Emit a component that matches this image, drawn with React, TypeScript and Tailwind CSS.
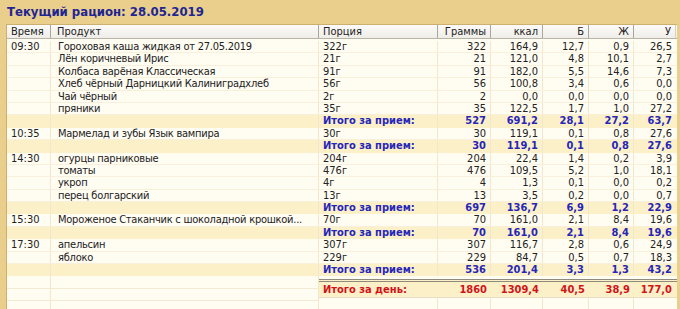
type Item = { time?: string; name: string; portion: string; g: string; kcal: string; p: string; f: string; c: string };
type Meal = { items: Item[]; total: [string, string, string, string, string] };

const meals: Meal[] = [
  {
    items: [
      { time: '09:30', name: 'Гороховая каша жидкая от 27.05.2019', portion: '322г', g: '322', kcal: '164,9', p: '12,7', f: '0,9', c: '26,5' },
      { name: 'Лён коричневый Ирис', portion: '21г', g: '21', kcal: '121,0', p: '4,8', f: '10,1', c: '2,7' },
      { name: 'Колбаса варёная Классическая', portion: '91г', g: '91', kcal: '182,0', p: '5,5', f: '14,6', c: '7,3' },
      { name: 'Хлеб чёрный Дарницкий Калиниградхлеб', portion: '56г', g: '56', kcal: '100,8', p: '3,4', f: '0,6', c: '0,0' },
      { name: 'Чай чёрный', portion: '2г', g: '2', kcal: '0,0', p: '0,0', f: '0,0', c: '0,0' },
      { name: 'пряники', portion: '35г', g: '35', kcal: '122,5', p: '1,7', f: '1,0', c: '27,2' },
    ],
    total: ['527', '691,2', '28,1', '27,2', '63,7'],
  },
  {
    items: [{ time: '10:35', name: 'Мармелад и зубы Язык вампира', portion: '30г', g: '30', kcal: '119,1', p: '0,1', f: '0,8', c: '27,6' }],
    total: ['30', '119,1', '0,1', '0,8', '27,6'],
  },
  {
    items: [
      { time: '14:30', name: 'огурцы парниковые', portion: '204г', g: '204', kcal: '22,4', p: '1,4', f: '0,2', c: '3,9' },
      { name: 'томаты', portion: '476г', g: '476', kcal: '109,5', p: '5,2', f: '1,0', c: '18,1' },
      { name: 'укроп', portion: '4г', g: '4', kcal: '1,3', p: '0,1', f: '0,0', c: '0,2' },
      { name: 'перец болгарский', portion: '13г', g: '13', kcal: '3,5', p: '0,2', f: '0,0', c: '0,7' },
    ],
    total: ['697', '136,7', '6,9', '1,2', '22,9'],
  },
  {
    items: [{ time: '15:30', name: 'Мороженое Стаканчик с шоколадной крошкой...', portion: '70г', g: '70', kcal: '161,0', p: '2,1', f: '8,4', c: '19,6' }],
    total: ['70', '161,0', '2,1', '8,4', '19,6'],
  },
  {
    items: [
      { time: '17:30', name: 'апельсин', portion: '307г', g: '307', kcal: '116,7', p: '2,8', f: '0,6', c: '24,9' },
      { name: 'яблоко', portion: '229г', g: '229', kcal: '84,7', p: '0,5', f: '0,7', c: '18,3' },
    ],
    total: ['536', '201,4', '3,3', '1,3', '43,2'],
  },
];

const cols = 'grid grid-cols-[44px_268px_119px_53px_52px_46px_45px_42px]';
const cell = 'px-[4px] truncate border-r border-[#f1e7cd]';
const num = `${cell} text-right`;

function ItemRow({ it }: { it: Item }) {
  return (
    <div className={`${cols} h-[12.4px] leading-[12.4px] bg-[#fffcf2] border-b border-[#f8f0da] text-[#222]`}>
      <div className={cell}>{it.time ?? ''}</div>
      <div className="pl-[7px] min-w-0 whitespace-nowrap overflow-hidden border-r border-[#f1e7cd] tracking-[-0.25px]">{it.name}</div>
      <div className={cell}>{it.portion}</div>
      <div className={num}>{it.g}</div>
      <div className={num}>{it.kcal}</div>
      <div className={num}>{it.p}</div>
      <div className={num}>{it.f}</div>
      <div className={`${num} border-r-0`}>{it.c}</div>
    </div>
  );
}

function TotalRow({ t }: { t: Meal['total'] }) {
  return (
    <div className={`${cols} h-[12.4px] leading-[12.4px] bg-[#fcf0c9] font-bold text-[#2626b8]`}>
      <div className={cell}></div>
      <div className={cell}></div>
      <div className={cell}>Итого за прием:</div>
      {t.map((v, i) => (
        <div key={i} className={i === 4 ? `${num} border-r-0` : num}>{v}</div>
      ))}
    </div>
  );
}

function BlankLeft() {
  return (
    <div className="grid grid-cols-[44px_268px] h-[12.4px] bg-[#fffcf2] border-b border-[#f4ead2]">
      <div className="border-r border-[#f1e7cd]"></div>
      <div className="border-r border-[#f1e7cd]"></div>
    </div>
  );
}

export default function App() {
  const heads = ['Граммы', 'ккал', 'Б', 'Ж', 'У'];
  const day = ['1860', '1309,4', '40,5', '38,9', '177,0'];
  return (
    <div
      className="w-[680px] h-[309px] overflow-hidden bg-[#e9cf8b] text-[11px]"
      style={{ fontFamily: '"DejaVu Sans Condensed", "DejaVu Sans", sans-serif' }}
    >
      <div className="h-[24px] pl-[7px] pt-[3px] text-[13px] font-bold text-[#1f2593] leading-[18px]">
        Текущий рацион: 28.05.2019
      </div>
      <div className="ml-[6px] w-[671px] h-[285px] bg-[#fffcf2] border-l border-[#b9944a] border-t border-[#cdb070]">
        <div className={`${cols} h-[14px] leading-[13px] bg-gradient-to-b from-[#fcfbf8] to-[#efede8] border-b border-[#b8b4aa] text-[#222]`}>
          <div className="px-[4px] border-r border-[#a9a69e]">Время</div>
          <div className="px-[6px] border-r border-[#a9a69e]">Продукт</div>
          <div className="px-[4px] border-r border-[#a9a69e]">Порция</div>
          {heads.map((h, i) => (
            <div key={h} className={`px-[4px] text-right border-r ${i === 4 ? 'border-[#d4d1c8]' : 'border-[#a9a69e]'}`}>{h}</div>
          ))}
        </div>
        <div className="pt-[2px]">
          {meals.map((m, i) => (
            <div key={i}>
              {m.items.map((it, j) => (
                <ItemRow key={j} it={it} />
              ))}
              <TotalRow t={m.total} />
            </div>
          ))}
          <div className="flex">
            <div className="w-[312px]">
              <BlankLeft />
              <BlankLeft />
              <BlankLeft />
            </div>
            <div className="w-[359px]">
              <div className="h-[3px] bg-[#fffcf2]"></div>
              <div className="border-t-[3px] border-double border-[#8f8a7c] bg-[#fcf0c9] h-[18px] grid grid-cols-[119px_53px_52px_46px_45px_42px] leading-[15px] font-bold text-[#d0141a]">
                <div className="px-[4px]">Итого за день:</div>
                {day.map((v) => (
                  <div key={v} className="px-[4px] text-right">{v}</div>
                ))}
              </div>
              <div className="grid grid-cols-[119px_53px_52px_46px_45px_42px] h-[16px] border-t border-[#e9dfc4]">
                {day.map((v) => (
                  <div key={v} className="border-r border-[#f1e7cd]"></div>
                ))}
                <div></div>
              </div>
            </div>
          </div>
        </div>
      </div>
    </div>
  );
}
